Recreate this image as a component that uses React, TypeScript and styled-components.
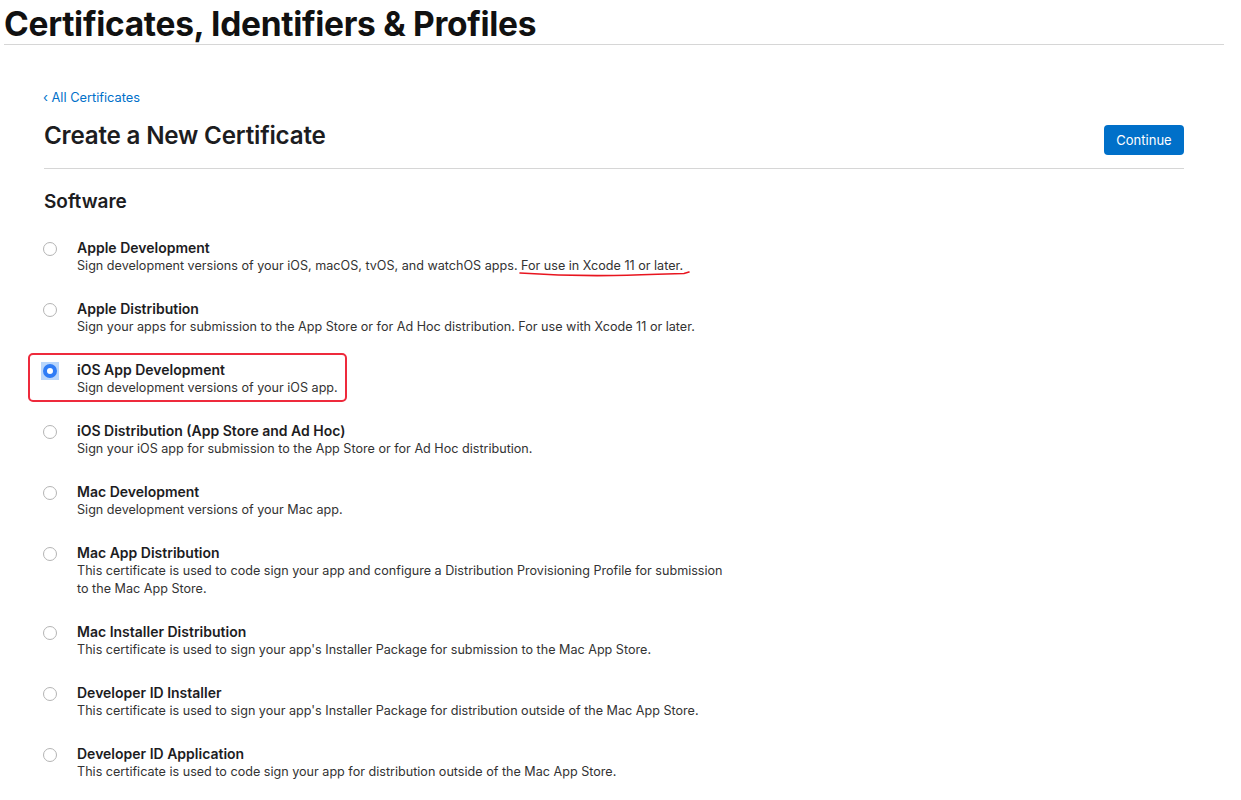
import React from "react";
import styled, { createGlobalStyle } from "styled-components";

const Global = createGlobalStyle`
  html, body { margin: 0; padding: 0; background: #fff; }
  body { font-family: Inter, "Noto Sans", "Liberation Sans", sans-serif; color: #1d1d1f; -webkit-font-smoothing: antialiased; }
`;

const Page = styled.div`
  width: 1241px;
  min-height: 800px;
  overflow: hidden;
`;

const TopBar = styled.header`
  margin: 0 17px 0 4px;
  border-bottom: 1px solid #d6d6d6;
  height: 44px;
  display: flex;
  align-items: center;
`;

const SiteTitle = styled.h1`
  margin: 4px 0 0;
  font-size: 33.5px;
  font-weight: 700;
  letter-spacing: -0.3px;
  color: #111;
  line-height: 40px;
`;

const Main = styled.main`
  width: 1140px;
  margin-left: 44px;
  padding-top: 41px;
`;

const BackLink = styled.a`
  font-size: 12.8px;
  color: #0070c9;
  text-decoration: none;
  line-height: 18px;
  display: inline-block;
  margin-left: -1px;
`;

const HeadRow = styled.div`
  display: flex;
  justify-content: space-between;
  align-items: flex-end;
  padding: 14px 0 13px;
  border-bottom: 1px solid #d6d6d6;
`;

const PageTitle = styled.h2`
  margin: 0;
  font-size: 24.2px;
  font-weight: 600;
  letter-spacing: -0.2px;
  color: #1d1d1f;
  line-height: 30px;
  margin-bottom: 4px;
`;

const PrimaryButton = styled.button`
  width: 80px;
  height: 30px;
  border: none;
  border-radius: 4px;
  background: #0070c9;
  color: #fff;
  font-family: inherit;
  font-size: 13px;
  font-weight: 400;
  cursor: pointer;
`;

const SectionTitle = styled.h3`
  margin: 20px 0 0;
  font-size: 19px;
  font-weight: 600;
  line-height: 26px;
  color: #1d1d1f;
`;

const OptionList = styled.ul`
  list-style: none;
  margin: 0;
  padding: 0;
  padding-top: 24px;
  display: flex;
  flex-direction: column;
  gap: 25px;
`;

const Option = styled.li`
  position: relative;
  display: flex;
  align-items: flex-start;
  gap: 18px;
`;

const RadioWrap = styled.span<{ $focused?: boolean }>`
  width: 18px;
  height: 18px;
  margin-top: 1px;
  margin-left: -3px;
  display: flex;
  align-items: center;
  justify-content: center;
  flex: none;
  background: ${(p) => (p.$focused ? "#b9d6fb" : "transparent")};
`;

const Radio = styled.span<{ $checked?: boolean }>`
  width: 14px;
  height: 14px;
  border-radius: 50%;
  box-sizing: border-box;
  border: ${(p) => (p.$checked ? "4.5px solid #2f7cf6" : "1px solid #b4b4b4")};
  background: #fff;
`;

const OptionText = styled.div`
  display: flex;
  flex-direction: column;
  max-width: 650px;
`;

const OptionTitle = styled.span`
  font-size: 14px;
  font-weight: 600;
  line-height: 18px;
  color: #1d1d1f;
`;

const OptionDesc = styled.span`
  font-size: 12.6px;
  line-height: 18px;
  color: #333;
`;

const Marked = styled.span`
  position: relative;
`;

const Squiggle = styled.svg`
  position: absolute;
  left: -2px;
  top: 12px;
  width: 172px;
  height: 10px;
  overflow: visible;
  pointer-events: none;
`;

const Highlight = styled.span`
  position: absolute;
  left: -16px;
  top: -8px;
  width: 319px;
  height: 49px;
  border: 2px solid #ee2a3c;
  border-radius: 5px;
  box-sizing: border-box;
  pointer-events: none;
`;

type Item = { title: string; desc: React.ReactNode; checked?: boolean };

const items: Item[] = [
  {
    title: "Apple Development",
    desc: (
      <>
        Sign development versions of your iOS, macOS, tvOS, and watchOS apps.{" "}
        <Marked>
          For use in Xcode 11 or later.
          <Squiggle viewBox="0 0 172 10">
            <path
              d="M1 3 C 30 5, 60 6, 95 5.5 C 125 5, 150 4, 165 3.5 L 170 2"
              stroke="#e8151f"
              strokeWidth="1.6"
              fill="none"
              strokeLinecap="round"
            />
          </Squiggle>
        </Marked>
      </>
    ),
  },
  {
    title: "Apple Distribution",
    desc: "Sign your apps for submission to the App Store or for Ad Hoc distribution. For use with Xcode 11 or later.",
  },
  {
    title: "iOS App Development",
    desc: "Sign development versions of your iOS app.",
    checked: true,
  },
  {
    title: "iOS Distribution (App Store and Ad Hoc)",
    desc: "Sign your iOS app for submission to the App Store or for Ad Hoc distribution.",
  },
  { title: "Mac Development", desc: "Sign development versions of your Mac app." },
  {
    title: "Mac App Distribution",
    desc: "This certificate is used to code sign your app and configure a Distribution Provisioning Profile for submission to the Mac App Store.",
  },
  {
    title: "Mac Installer Distribution",
    desc: "This certificate is used to sign your app's Installer Package for submission to the Mac App Store.",
  },
  {
    title: "Developer ID Installer",
    desc: "This certificate is used to sign your app's Installer Package for distribution outside of the Mac App Store.",
  },
  {
    title: "Developer ID Application",
    desc: "This certificate is used to code sign your app for distribution outside of the Mac App Store.",
  },
];

export default function App() {
  return (
    <Page>
      <Global />
      <TopBar>
        <SiteTitle>Certificates, Identifiers &amp; Profiles</SiteTitle>
      </TopBar>
      <Main>
        <BackLink href="#">‹ All Certificates</BackLink>
        <HeadRow>
          <PageTitle>Create a New Certificate</PageTitle>
          <PrimaryButton>Continue</PrimaryButton>
        </HeadRow>
        <SectionTitle>Software</SectionTitle>
        <OptionList>
          {items.map((it) => (
            <Option key={it.title}>
              {it.checked && <Highlight />}
              <RadioWrap $focused={it.checked}>
                <Radio $checked={it.checked} />
              </RadioWrap>
              <OptionText>
                <OptionTitle>{it.title}</OptionTitle>
                <OptionDesc>{it.desc}</OptionDesc>
              </OptionText>
            </Option>
          ))}
        </OptionList>
      </Main>
    </Page>
  );
}
